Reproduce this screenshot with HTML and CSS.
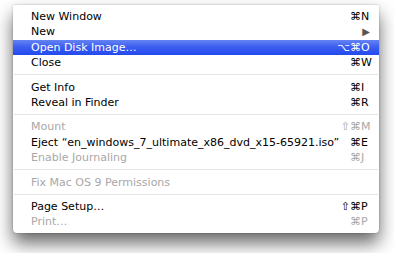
FILE: index.html
```html
<!DOCTYPE html>
<html lang="en">
  <head>
    <meta charset="UTF-8" />
    <title>Finder File Menu</title>
    <link rel="stylesheet" href="styles.css">
  </head>
  <body>
    <div class="menu">
      <div class="item"><span class="label">New Window</span><span class="keys"><span class="mods">⌘</span><span class="key">N</span></span></div>
      <div class="item"><span class="label">New</span><span class="arrow">▶</span></div>
      <div class="item selected"><span class="label">Open Disk Image…</span><span class="keys"><span class="mods">⌥⌘</span><span class="key">O</span></span></div>
      <div class="item"><span class="label">Close</span><span class="keys"><span class="mods">⌘</span><span class="key">W</span></span></div>
      <div class="separator"></div>
      <div class="item"><span class="label">Get Info</span><span class="keys"><span class="mods">⌘</span><span class="key">I</span></span></div>
      <div class="item"><span class="label">Reveal in Finder</span><span class="keys"><span class="mods">⌘</span><span class="key">R</span></span></div>
      <div class="separator"></div>
      <div class="item disabled"><span class="label">Mount</span><span class="keys"><span class="mods">⇧⌘</span><span class="key">M</span></span></div>
      <div class="item"><span class="label">Eject “en_windows_7_ultimate_x86_dvd_x15-65921.iso”</span><span class="keys"><span class="mods">⌘</span><span class="key">E</span></span></div>
      <div class="item disabled"><span class="label">Enable Journaling</span><span class="keys"><span class="mods">⌘</span><span class="key">J</span></span></div>
      <div class="separator"></div>
      <div class="item disabled"><span class="label">Fix Mac OS 9 Permissions</span></div>
      <div class="separator"></div>
      <div class="item"><span class="label">Page Setup…</span><span class="keys"><span class="mods">⇧⌘</span><span class="key">P</span></span></div>
      <div class="item disabled"><span class="label">Print…</span><span class="keys"><span class="mods">⌘</span><span class="key">P</span></span></div>
    </div>
  </body>
</html>
```
FILE: styles.css
```css
html,
body {
  min-height: 100%;
}

body {
  margin: 0;
  padding: 5px 0 20px 13px;
  background-color: #ffffff;
  font-family: "DejaVu Sans", "Liberation Sans", sans-serif;
}

.menu {
  width: 366px;
  padding: 4px 0 3px;
  background-color: #ffffff;
  border-radius: 0 0 4px 4px;
  box-shadow: 0 10px 18px rgba(0, 0, 0, 0.6), 0 0 2px rgba(0, 0, 0, 0.3);
}

.item {
  display: flex;
  align-items: center;
  height: 15.3px;
  padding: 0 8px 0 18px;
  font-size: 11px;
  color: #000000;
}

.item .label {
  flex: 1;
  white-space: nowrap;
}

.item.selected {
  background: linear-gradient(#6483f4, #3a5cf0 50%, #2349ee);
  color: #ffffff;
}

.item.disabled {
  color: #a8a8a8;
}

.keys {
  display: flex;
}

.mods {
  text-align: right;
}

.key {
  width: 10px;
  text-align: left;
}

.arrow {
  font-size: 10px;
  color: #555555;
  margin-right: 1px;
}

.separator {
  height: 1px;
  margin: 4px 1px 4.25px;
  background-color: #e4e4e4;
}
```
